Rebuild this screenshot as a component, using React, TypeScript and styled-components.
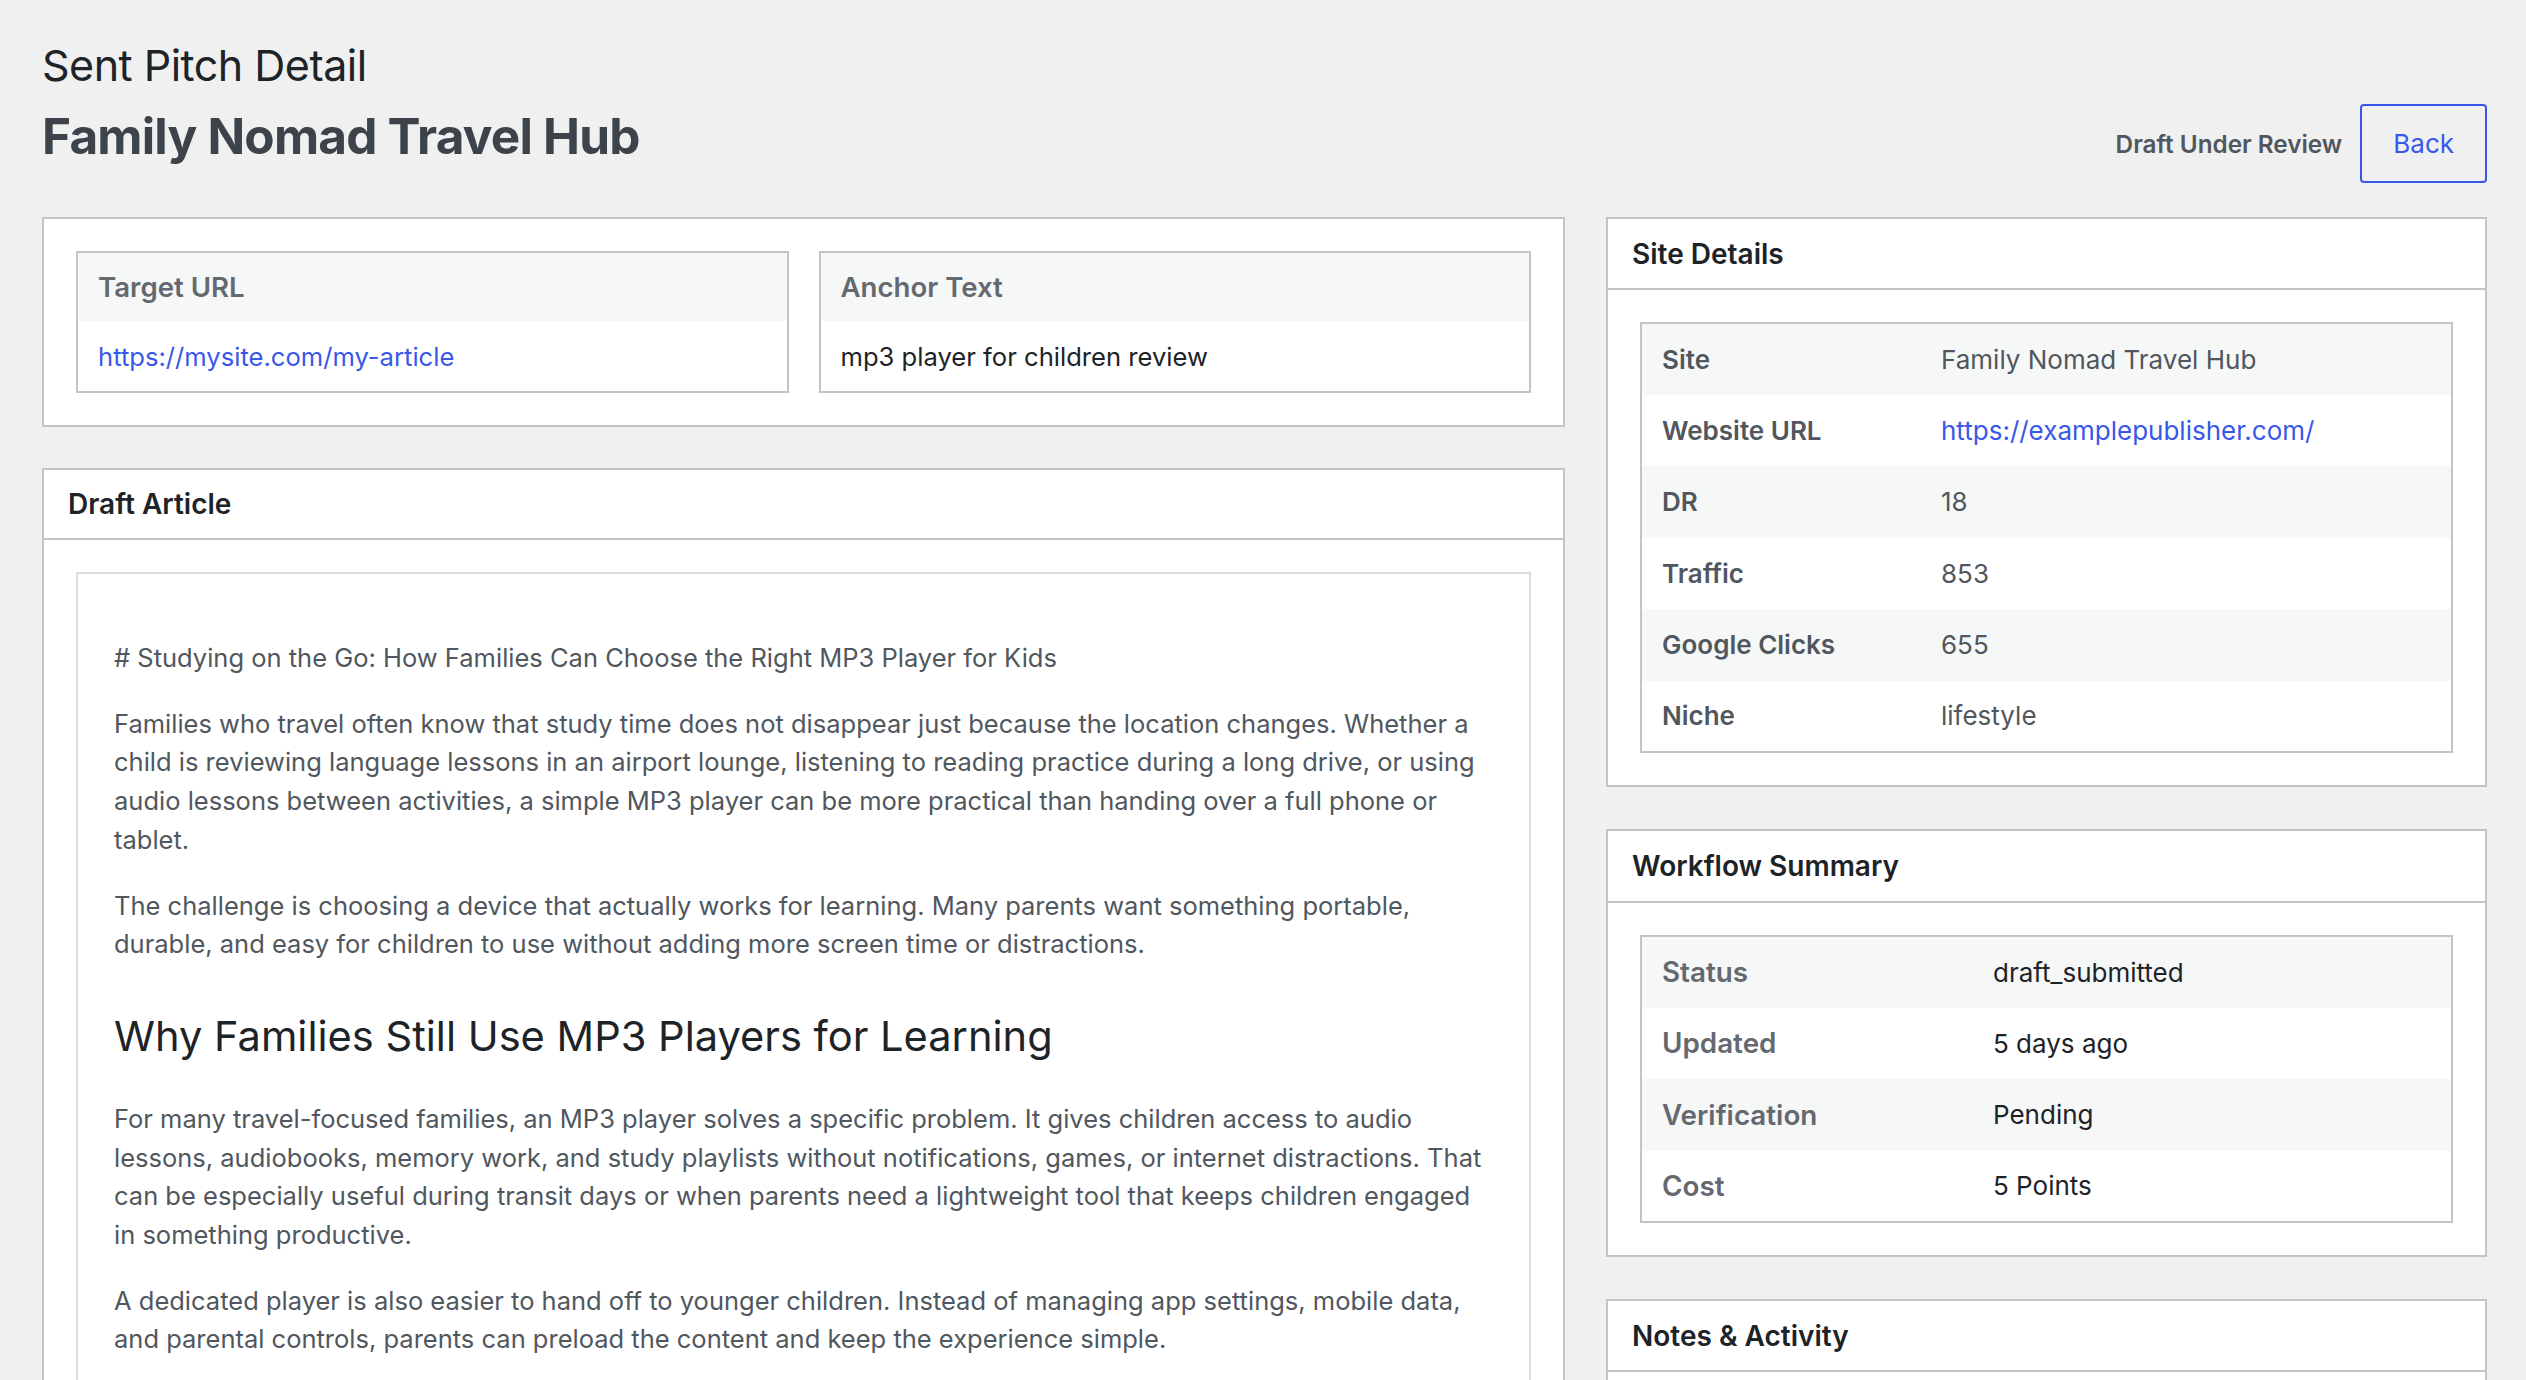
import React from 'react';
import styled, { createGlobalStyle } from 'styled-components';

const GlobalStyle = createGlobalStyle`
  * { box-sizing: border-box; }
  html, body {
    margin: 0;
    padding: 0;
    background: #f0f0f1;
    overflow: hidden;
  }
  body {
    font-family: Inter, "Noto Sans", "Liberation Sans", sans-serif;
    color: #1d2327;
    -webkit-font-smoothing: antialiased;
  }
`;

const Page = styled.div`
  min-height: 100vh;
  padding: 37px 39px 0 42px;
`;

const Header = styled.header`
  display: flex;
  justify-content: space-between;
  align-items: flex-end;
  margin-bottom: 34px;
`;

const TitleBlock = styled.div`
  display: flex;
  flex-direction: column;
`;

const Eyebrow = styled.h1`
  margin: 0;
  font-size: 43px;
  line-height: 57px;
  font-weight: 400;
  letter-spacing: -0.5px;
  color: #1d2327;
`;

const SiteTitle = styled.h2`
  margin: 12px 0 16px;
  font-size: 49.5px;
  line-height: 61px;
  font-weight: 700;
  letter-spacing: -0.8px;
  color: #3c434a;
`;

const Actions = styled.div`
  display: flex;
  align-items: center;
  gap: 18px;
`;

const StatusText = styled.span`
  font-size: 24.3px;
  font-weight: 600;
  color: #50575e;
`;

const BackButton = styled.button`
  height: 79px;
  padding: 0 31px;
  border: 2px solid #3858e9;
  border-radius: 4px;
  background: transparent;
  color: #3858e9;
  font-family: inherit;
  font-size: 26px;
  cursor: pointer;
`;

const Layout = styled.div`
  display: grid;
  grid-template-columns: 1fr 881px;
  gap: 41px;
  align-items: start;
`;

const Column = styled.div<{ $gap: number }>`
  display: flex;
  flex-direction: column;
  gap: ${p => p.$gap}px;
`;

const Card = styled.section`
  background: #fff;
  border: 2px solid #c3c4c7;
`;

const CardHeader = styled.div<{ $height: number }>`
  height: ${p => p.$height}px;
  padding: 0 24px;
  display: flex;
  align-items: center;
  border-bottom: 2px solid #c3c4c7;
  font-size: 28px;
  font-weight: 600;
  color: #1d2327;
`;

const CardBody = styled.div<{ $minHeight?: number }>`
  padding: 32px;
  min-height: ${p => (p.$minHeight ? `${p.$minHeight}px` : 'auto')};
`;

const FieldGrid = styled.div`
  display: grid;
  grid-template-columns: 1fr 1fr;
  gap: 30px;
`;

const FieldBox = styled.div`
  border: 2px solid #c3c4c7;
`;

const FieldLabel = styled.div`
  height: 68px;
  padding: 0 20px;
  display: flex;
  align-items: center;
  background: #f6f7f7;
  font-size: 27.6px;
  font-weight: 600;
  color: #646970;
`;

const FieldValue = styled.div`
  height: 70px;
  padding: 0 20px;
  display: flex;
  align-items: center;
  font-size: 25.6px;
  color: #1d2327;
`;

const Link = styled.a`
  color: #3858e9;
  text-decoration: none;
`;

const ArticleBox = styled.div`
  border: 2px solid #dcdcde;
  padding: 38px 36px 36px;
  font-size: 25.5px;
  line-height: 38.7px;
  color: #50575e;
`;

const Paragraph = styled.p`
  margin: 27px 0;
`;

const SubHeading = styled.h2`
  margin: 46px 0 37px;
  font-size: 41.6px;
  line-height: 53px;
  font-weight: 400;
  color: #1d2327;
`;

const DetailTable = styled.table`
  width: 100%;
  border-collapse: collapse;
  border: 2px solid #c3c4c7;
  font-size: 26px;
`;

const Row = styled.tr<{ $height: number }>`
  height: ${p => p.$height}px;
  &:nth-child(odd) {
    background: #f6f7f7;
  }
`;

const LabelCell = styled.th<{ $width: number; $color: string; $size: number }>`
  width: ${p => p.$width}px;
  padding: 0 20px;
  text-align: left;
  font-weight: 600;
  font-size: ${p => p.$size}px;
  color: ${p => p.$color};
`;

const ValueCell = styled.td<{ $color: string }>`
  padding: 0 20px;
  color: ${p => p.$color};
`;

type Detail = { label: string; value: string; href?: string };

const siteDetails: Detail[] = [
  { label: 'Site', value: 'Family Nomad Travel Hub' },
  { label: 'Website URL', value: 'https://examplepublisher.com/', href: '#' },
  { label: 'DR', value: '18' },
  { label: 'Traffic', value: '853' },
  { label: 'Google Clicks', value: '655' },
  { label: 'Niche', value: 'lifestyle' },
];

const workflow: Detail[] = [
  { label: 'Status', value: 'draft_submitted' },
  { label: 'Updated', value: '5 days ago' },
  { label: 'Verification', value: 'Pending' },
  { label: 'Cost', value: '5 Points' },
];

const DetailsTable: React.FC<{
  rows: Detail[];
  labelWidth: number;
  labelColor: string;
  labelSize: number;
  valueColor: string;
  rowHeight: number;
}> = ({ rows, labelWidth, labelColor, labelSize, valueColor, rowHeight }) => (
  <DetailTable>
    <tbody>
      {rows.map(r => (
        <Row key={r.label} $height={rowHeight}>
          <LabelCell $width={labelWidth} $color={labelColor} $size={labelSize}>
            {r.label}
          </LabelCell>
          <ValueCell $color={valueColor}>
            {r.href ? <Link href={r.href}>{r.value}</Link> : r.value}
          </ValueCell>
        </Row>
      ))}
    </tbody>
  </DetailTable>
);

const App: React.FC = () => {
  return (
    <>
      <GlobalStyle />
      <Page>
        <Header>
          <TitleBlock>
            <Eyebrow>Sent Pitch Detail</Eyebrow>
            <SiteTitle>Family Nomad Travel Hub</SiteTitle>
          </TitleBlock>
          <Actions>
            <StatusText>Draft Under Review</StatusText>
            <BackButton>Back</BackButton>
          </Actions>
        </Header>

        <Layout>
          <Column $gap={41}>
            <Card>
              <CardBody>
                <FieldGrid>
                  <FieldBox>
                    <FieldLabel>Target URL</FieldLabel>
                    <FieldValue>
                      <Link href="#">https://mysite.com/my-article</Link>
                    </FieldValue>
                  </FieldBox>
                  <FieldBox>
                    <FieldLabel>Anchor Text</FieldLabel>
                    <FieldValue>mp3 player for children review</FieldValue>
                  </FieldBox>
                </FieldGrid>
              </CardBody>
            </Card>

            <Card>
              <CardHeader $height={70}>Draft Article</CardHeader>
              <CardBody>
                <ArticleBox>
                  <Paragraph># Studying on the Go: How Families Can Choose the Right MP3 Player for Kids</Paragraph>
                  <Paragraph>
                    Families who travel often know that study time does not disappear just because the location
                    changes. Whether a child is reviewing language lessons in an airport lounge, listening to reading
                    practice during a long drive, or using audio lessons between activities, a simple MP3 player can be
                    more practical than handing over a full phone or tablet.
                  </Paragraph>
                  <Paragraph>
                    The challenge is choosing a device that actually works for learning. Many parents want something
                    portable, durable, and easy for children to use without adding more screen time or distractions.
                  </Paragraph>
                  <SubHeading>Why Families Still Use MP3 Players for Learning</SubHeading>
                  <Paragraph>
                    For many travel-focused families, an MP3 player solves a specific problem. It gives children access
                    to audio lessons, audiobooks, memory work, and study playlists without notifications, games, or
                    internet distractions. That can be especially useful during transit days or when parents need a
                    lightweight tool that keeps children engaged in something productive.
                  </Paragraph>
                  <Paragraph>
                    A dedicated player is also easier to hand off to younger children. Instead of managing app
                    settings, mobile data, and parental controls, parents can preload the content and keep the
                    experience simple.
                  </Paragraph>
                </ArticleBox>
              </CardBody>
            </Card>
          </Column>

          <Column $gap={42}>
            <Card>
              <CardHeader $height={71}>Site Details</CardHeader>
              <CardBody>
                <DetailsTable
                  rows={siteDetails}
                  labelWidth={280}
                  labelColor="#50575e"
                  labelSize={26}
                  valueColor="#50575e"
                  rowHeight={71.5}
                />
              </CardBody>
            </Card>

            <Card>
              <CardHeader $height={72}>Workflow Summary</CardHeader>
              <CardBody>
                <DetailsTable
                  rows={workflow}
                  labelWidth={332}
                  labelColor="#646970"
                  labelSize={27.8}
                  valueColor="#1d2327"
                  rowHeight={71.5}
                />
              </CardBody>
            </Card>

            <Card>
              <CardHeader $height={71}>Notes &amp; Activity</CardHeader>
              <CardBody $minHeight={240} />
            </Card>
          </Column>
        </Layout>
      </Page>
    </>
  );
};

export default App;
